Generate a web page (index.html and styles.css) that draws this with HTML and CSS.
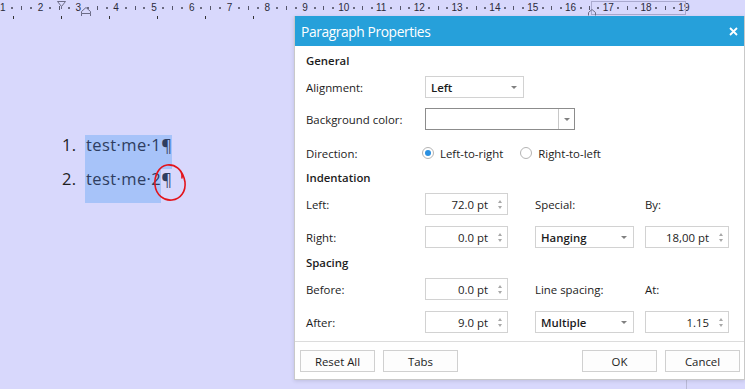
FILE: index.html
```html
<!DOCTYPE html>
<html lang="en">
<head>
  <meta charset="UTF-8" />
  <meta name="viewport" content="width=device-width, initial-scale=1" />
  <title>Paragraph Properties</title>
  <link rel="stylesheet" href="styles.css">
</head>
<body>
  <!-- Cetvel -->
  <div class="ruler">
    <div class="scale">
      <div class="cm"><b>1</b><i></i><u></u><i></i></div>
      <div class="cm"><b>2</b><i></i><u></u><i></i></div>
      <div class="cm"><b>3</b><i></i><u></u><i></i></div>
      <div class="cm"><b>4</b><i></i><u></u><i></i></div>
      <div class="cm"><b>5</b><i></i><u></u><i></i></div>
      <div class="cm"><b>6</b><i></i><u></u><i></i></div>
      <div class="cm"><b>7</b><i></i><u></u><i></i></div>
      <div class="cm"><b>8</b><i></i><u></u><i></i></div>
      <div class="cm"><b>9</b><i></i><u></u><i></i></div>
      <div class="cm"><b>10</b><i></i><u></u><i></i></div>
      <div class="cm"><b>11</b><i></i><u></u><i></i></div>
      <div class="cm"><b>12</b><i></i><u></u><i></i></div>
      <div class="cm"><b>13</b><i></i><u></u><i></i></div>
      <div class="cm"><b>14</b><i></i><u></u><i></i></div>
      <div class="cm"><b>15</b><i></i><u></u><i></i></div>
      <div class="cm"><b>16</b><i></i><u></u><i></i></div>
      <div class="cm"><b>17</b><i></i><u></u><i></i></div>
      <div class="cm"><b>18</b><i></i><u></u><i></i></div>
      <div class="cm"><b>19</b></div>
    </div>
    <svg class="ruler-marks" width="745" height="16" viewBox="0 0 745 16">
      <rect x="591.5" y="1.5" width="94" height="13" fill="none" stroke="#a9a9cf" />
      <path d="M57.5 1.5 H65.5 L61.5 6.5 Z M61.5 6.5 V9" fill="none" stroke="#6b6b86" />
      <path d="M81.5 11.5 L86 7.5 L90.5 11.5 V13.5 H81.5 Z M81.5 13.5 V17.5 H90.5 V13.5" fill="none" stroke="#6b6b86" />
      <path d="M588.5 15.5 V12.5 L592 9.5 L595.5 12.5 V15.5" fill="none" stroke="#6b6b86" />
    </svg>
  </div>

  <!-- Belge -->
  <div class="doc">
    <div class="tabstops"><span></span><span></span><span></span><span></span><span></span><span></span></div>
    <ol class="list">
      <li><span class="num">1.</span><span class="sel">test·me·1¶</span></li>
      <li><span class="num">2.</span><span class="sel">test·me·2</span><span class="pil">¶</span></li>
    </ol>
    <svg class="scribble" width="45" height="45" viewBox="0 0 45 45">
      <path d="M33 18 C34 10 26 4 18 5 C10 6 5 16 6 25 C7 35 15 41 23 40 C32 39 37 31 36 22 C35 16 33 12 30 9" fill="none" stroke="#e3141c" stroke-width="1.6" stroke-linecap="round" />
    </svg>
  </div>

  <!-- Paragraf penceresi -->
  <div class="dialog">
    <div class="dialog-title">
      <span>Paragraph Properties</span>
      <svg class="close" width="9" height="9" viewBox="0 0 9 9"><path d="M1 1 L8 8 M8 1 L1 8" stroke="#fff" stroke-width="1.8" /></svg>
    </div>
    <div class="dialog-body">
      <div class="row heading">General</div>
      <div class="row first">
        <span class="lbl">Alignment:</span>
        <div class="select"><span>Left</span><i class="caret"></i></div>
      </div>
      <div class="row">
        <span class="lbl">Background color:</span>
        <div class="color-box"><span class="swatch"></span><span class="drop"><i class="caret"></i></span></div>
      </div>
      <div class="row radios">
        <span class="lbl">Direction:</span>
        <div class="radio-group">
          <span class="radio on"></span><span class="rlabel">Left-to-right</span>
          <span class="radio"></span><span class="rlabel">Right-to-left</span>
        </div>
      </div>

      <div class="row heading">Indentation</div>
      <div class="row first">
        <span class="lbl">Left:</span>
        <div class="spin"><span class="val">72.0 pt</span><span class="arrows"><i class="up"></i><i class="down"></i></span></div>
        <span class="lbl">Special:</span>
        <span class="lbl">By:</span>
      </div>
      <div class="row wide">
        <span class="lbl">Right:</span>
        <div class="spin"><span class="val">0.0 pt</span><span class="arrows"><i class="up"></i><i class="down"></i></span></div>
        <div class="select"><span>Hanging</span><i class="caret"></i></div>
        <div class="spin"><span class="val">18,00 pt</span><span class="arrows"><i class="up"></i><i class="down"></i></span></div>
      </div>

      <div class="row heading">Spacing</div>
      <div class="row first">
        <span class="lbl">Before:</span>
        <div class="spin"><span class="val">0.0 pt</span><span class="arrows"><i class="up"></i><i class="down"></i></span></div>
        <span class="lbl">Line spacing:</span>
        <span class="lbl">At:</span>
      </div>
      <div class="row wide">
        <span class="lbl">After:</span>
        <div class="spin"><span class="val">9.0 pt</span><span class="arrows"><i class="up"></i><i class="down"></i></span></div>
        <div class="select"><span>Multiple</span><i class="caret"></i></div>
        <div class="spin"><span class="val">1.15</span><span class="arrows"><i class="up"></i><i class="down"></i></span></div>
      </div>
    </div>
    <div class="dialog-footer">
      <div class="btn-group">
        <button class="btn">Reset All</button>
        <button class="btn">Tabs</button>
      </div>
      <div class="btn-group">
        <button class="btn">OK</button>
        <button class="btn">Cancel</button>
      </div>
    </div>
  </div>
</body>
</html>
```

FILE: styles.css
```css
/* Genel */
body {
  margin: 0;
  background: #d8d8fc;
  font-family: 'Open Sans', sans-serif;
  color: #1c1c1c;
  height: 100vh;
  overflow: hidden;
  position: relative;
}

/* Cetvel */
.ruler {
  position: relative;
  height: 16px;
}
.scale {
  display: flex;
  margin-left: -2px;
}
.cm {
  flex: none;
  width: 37.8px;
  height: 16px;
  display: grid;
  grid-template-columns: repeat(4, 1fr);
  align-items: center;
  justify-items: center;
}
.cm b {
  font-family: 'Liberation Sans', sans-serif;
  font-weight: normal;
  font-size: 10px;
  line-height: 16px;
  color: #2a2a3a;
}
.cm i {
  width: 2px;
  height: 2px;
  background: #6a6a80;
}
.cm u {
  width: 1px;
  height: 4px;
  background: #55556a;
}
.ruler-marks {
  position: absolute;
  left: 0;
  top: 0;
}

/* Belge */
.doc {
  position: relative;
  width: 686px;
  height: calc(100vh - 16px);
  border-right: 1px solid #b9b9d6;
}
.tabstops {
  display: flex;
  gap: 47px;
  padding-left: 13px;
  height: 4px;
}
.tabstops span {
  width: 1px;
  height: 3px;
  background: #333;
}
.list {
  list-style: none;
  margin: 115px 0 0;
  padding: 0 0 0 62px;
  font-size: 16.5px;
  letter-spacing: 0.4px;
}
.list li {
  display: flex;
  height: 34px;
  line-height: 20px;
}
.num {
  width: 23px;
  color: #1e1e1e;
}
.sel {
  background: #a7c3f9;
  padding-left: 1px;
  color: #2e3d60;
}
.pil {
  color: #2e3d60;
}
.scribble {
  position: absolute;
  left: 149px;
  top: 144px;
}

/* Paragraf penceresi */
.dialog {
  position: absolute;
  left: 294px;
  top: 16px;
  width: 451px;
  box-sizing: border-box;
  background: #fff;
  border: 1px solid #c9c9c9;
  border-top: none;
  box-shadow: 0 1px 4px rgba(0, 0, 0, 0.12);
  font-size: 11.4px;
}
.dialog-title {
  height: 30px;
  background: #26a0da;
  color: #fff;
  display: flex;
  align-items: center;
  justify-content: space-between;
  padding: 0 6px 0 6px;
  font-size: 13.8px;
  letter-spacing: -0.4px;
}
.dialog-body {
  padding: 4px 0 0 11px;
}
.row {
  display: grid;
  grid-template-columns: 119px 110px 110px 1fr;
  align-items: center;
  height: 22px;
  margin-top: 10px;
}
.row.heading {
  display: block;
  line-height: 22px;
  font-weight: 600;
  margin-top: 4px;
}
.dialog-body .row.heading:first-child {
  margin-top: 0;
}
.row.first {
  margin-top: 4px;
}
.row.radios {
  height: 20px;
  margin-top: 13px;
}
.row.wide {
  margin-top: 11px;
}

/* Kontroller */
.select, .spin {
  box-sizing: border-box;
  height: 22px;
  border: 1px solid #d2d2d2;
  display: flex;
  align-items: center;
}
.select {
  width: 99px;
  padding: 0 6px 0 5px;
  justify-content: space-between;
  font-weight: 600;
}
.caret {
  width: 0;
  height: 0;
  border-left: 3px solid transparent;
  border-right: 3px solid transparent;
  border-top: 3px solid #808080;
}
.color-box {
  grid-column: 2 / 4;
  box-sizing: border-box;
  width: 150px;
  height: 22px;
  border: 1px solid #8c8c8c;
  display: flex;
}
.swatch {
  flex: 1;
  border-right: 1px solid #c8c8c8;
}
.drop {
  width: 15px;
  display: flex;
  align-items: center;
  justify-content: center;
}
.spin {
  width: 83px;
  justify-content: flex-end;
}
.row .spin:last-child {
  width: 84px;
}
.val {
  padding-right: 5px;
}
.arrows {
  width: 14px;
  display: flex;
  flex-direction: column;
  align-items: center;
  gap: 3px;
}
.arrows i {
  width: 0;
  height: 0;
  border-left: 2.5px solid transparent;
  border-right: 2.5px solid transparent;
}
.arrows .up {
  border-bottom: 3px solid #a8a8a8;
}
.arrows .down {
  border-top: 3px solid #a8a8a8;
}
.radio-group {
  grid-column: 2 / -1;
  display: flex;
  align-items: center;
  margin-left: -3px;
}
.radio {
  box-sizing: border-box;
  width: 12px;
  height: 12px;
  border: 1px solid #b4b4b4;
  border-radius: 50%;
  display: flex;
  align-items: center;
  justify-content: center;
}
.radio.on::after {
  content: '';
  width: 6px;
  height: 6px;
  border-radius: 50%;
  background: #2a8fe0;
}
.rlabel {
  margin: 0 17px 0 6px;
}

/* Alt butonlar */
.dialog-footer {
  margin-top: 8px;
  border-top: 1px solid #dcdcdc;
  padding: 8px 4px 7px 5px;
  display: flex;
  justify-content: space-between;
}
.btn-group {
  display: flex;
  gap: 8px;
}
.btn {
  width: 75px;
  height: 22px;
  border: 1px solid #d0d0d0;
  background: #fdfdfd;
  font-family: 'Open Sans', sans-serif;
  font-size: 11.4px;
  color: #1c1c1c;
  padding: 0;
}
```
